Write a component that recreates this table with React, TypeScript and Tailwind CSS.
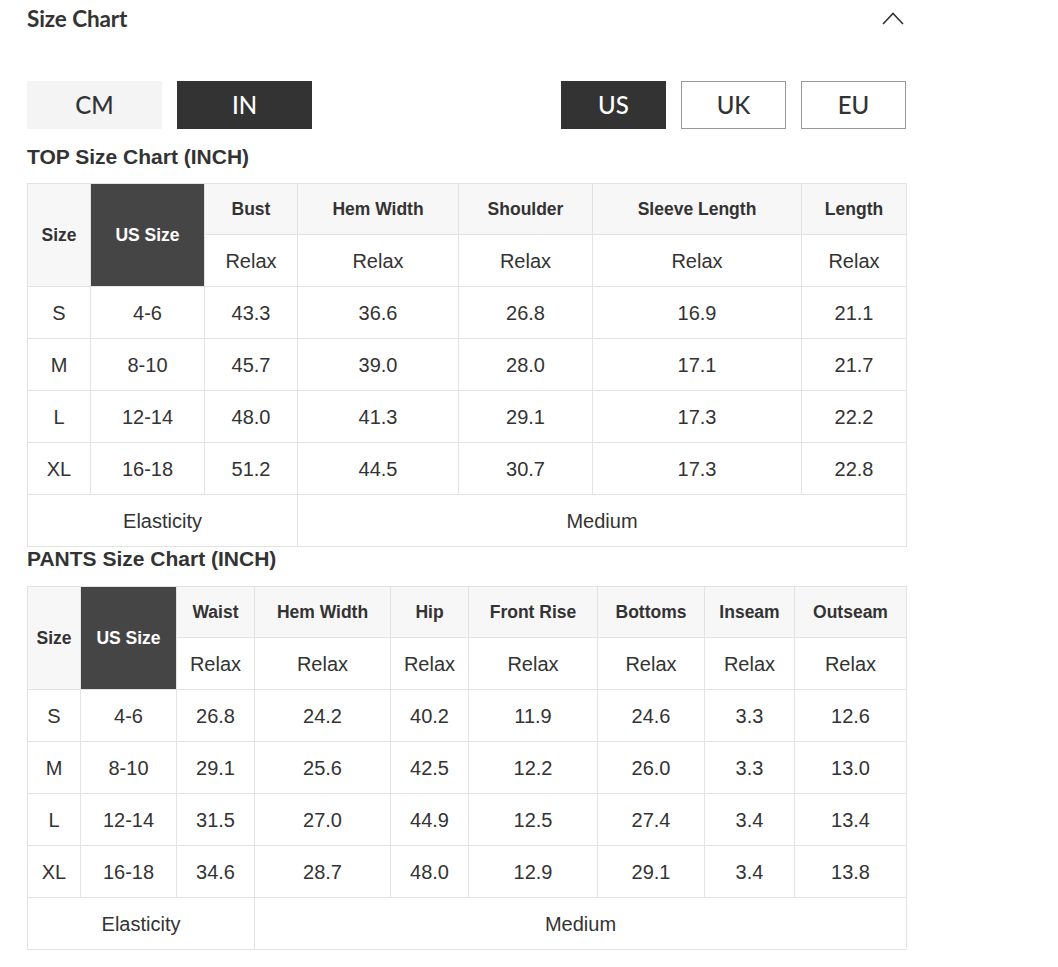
type Chart = {
  title: string;
  cols: string[];
  widths: string[];
  rows: string[][];
};

const top: Chart = {
  title: "TOP Size Chart (INCH)",
  cols: ["Bust", "Hem Width", "Shoulder", "Sleeve Length", "Length"],
  widths: ["w-[63px]", "w-[114px]", "w-[93px]", "w-[161px]", "w-[134px]", "w-[209px]", "w-[105px]"],
  rows: [
    ["S", "4-6", "43.3", "36.6", "26.8", "16.9", "21.1"],
    ["M", "8-10", "45.7", "39.0", "28.0", "17.1", "21.7"],
    ["L", "12-14", "48.0", "41.3", "29.1", "17.3", "22.2"],
    ["XL", "16-18", "51.2", "44.5", "30.7", "17.3", "22.8"],
  ],
};

const pants: Chart = {
  title: "PANTS Size Chart (INCH)",
  cols: ["Waist", "Hem Width", "Hip", "Front Rise", "Bottoms", "Inseam", "Outseam"],
  widths: [
    "w-[53px]",
    "w-[96px]",
    "w-[78px]",
    "w-[136px]",
    "w-[78px]",
    "w-[129px]",
    "w-[107px]",
    "w-[90px]",
    "w-[112px]",
  ],
  rows: [
    ["S", "4-6", "26.8", "24.2", "40.2", "11.9", "24.6", "3.3", "12.6"],
    ["M", "8-10", "29.1", "25.6", "42.5", "12.2", "26.0", "3.3", "13.0"],
    ["L", "12-14", "31.5", "27.0", "44.9", "12.5", "27.4", "3.4", "13.4"],
    ["XL", "16-18", "34.6", "28.7", "48.0", "12.9", "29.1", "3.4", "13.8"],
  ],
};

const cell = "border border-[#e3e3e3] text-center align-middle p-0";
const head = "font-bold text-[17.5px]";

function SizeTable({ chart, gap }: { chart: Chart; gap: string }) {
  return (
    <>
      <h3 className={`text-[21px] font-bold leading-[24px] text-[#333] ${gap}`}>{chart.title}</h3>
      <table className="w-full table-fixed border-collapse text-[#333] text-[20px]">
        <colgroup>
          {chart.widths.map((w, i) => (
            <col key={i} className={w} />
          ))}
        </colgroup>
        <tbody>
          <tr className="h-[51px]">
            <td rowSpan={2} className={`${cell} ${head} bg-[#f7f7f7]`}>
              Size
            </td>
            <td rowSpan={2} className={`${cell} ${head} bg-[#454545] text-white`}>
              US Size
            </td>
            {chart.cols.map((c) => (
              <td key={c} className={`${cell} ${head} bg-[#f7f7f7]`}>
                {c}
              </td>
            ))}
          </tr>
          <tr className="h-[52px]">
            {chart.cols.map((c) => (
              <td key={c} className={cell}>
                Relax
              </td>
            ))}
          </tr>
          {chart.rows.map((r) => (
            <tr key={r[0]} className="h-[52px]">
              {r.map((v, i) => (
                <td key={i} className={cell}>
                  {v}
                </td>
              ))}
            </tr>
          ))}
          <tr className="h-[52px]">
            <td colSpan={3} className={cell}>
              Elasticity
            </td>
            <td colSpan={chart.cols.length - 1} className={cell}>
              Medium
            </td>
          </tr>
        </tbody>
      </table>
    </>
  );
}

export default function App() {
  return (
    <div className="min-h-screen bg-white" style={{ fontFamily: '"Liberation Sans", Arial, sans-serif' }}>
      <div className="w-[879px] ml-[27px] pb-4">
        <div className="h-[38px] flex items-center justify-between">
          <span className="text-[22.5px] font-bold text-[#333] font-['Lato',sans-serif] tracking-[-0.1px]">
            Size Chart
          </span>
          <svg width="22" height="13" viewBox="0 0 22 13" className="mr-[2px] -mt-[1px]" fill="none">
            <polyline points="1,12 11,1.5 21,12" stroke="#333" strokeWidth="1.6" />
          </svg>
        </div>

        <div className="mt-[43px] mb-[16px] flex items-center justify-between font-['Lato',sans-serif] text-[24px] font-medium">
          <div className="flex gap-[15px]">
            <button className="w-[135px] h-[48px] bg-[#f4f4f4] text-[#333]">CM</button>
            <button className="w-[135px] h-[48px] bg-[#333] text-white">IN</button>
          </div>
          <div className="flex gap-[15px]">
            <button className="w-[105px] h-[48px] bg-[#333] text-white">US</button>
            <button className="w-[105px] h-[48px] border border-[#999] text-[#333]">UK</button>
            <button className="w-[105px] h-[48px] border border-[#999] text-[#333]">EU</button>
          </div>
        </div>

        <SizeTable chart={top} gap="mb-[14px]" />
        <SizeTable chart={pants} gap="mb-[15px]" />
      </div>
    </div>
  );
}
